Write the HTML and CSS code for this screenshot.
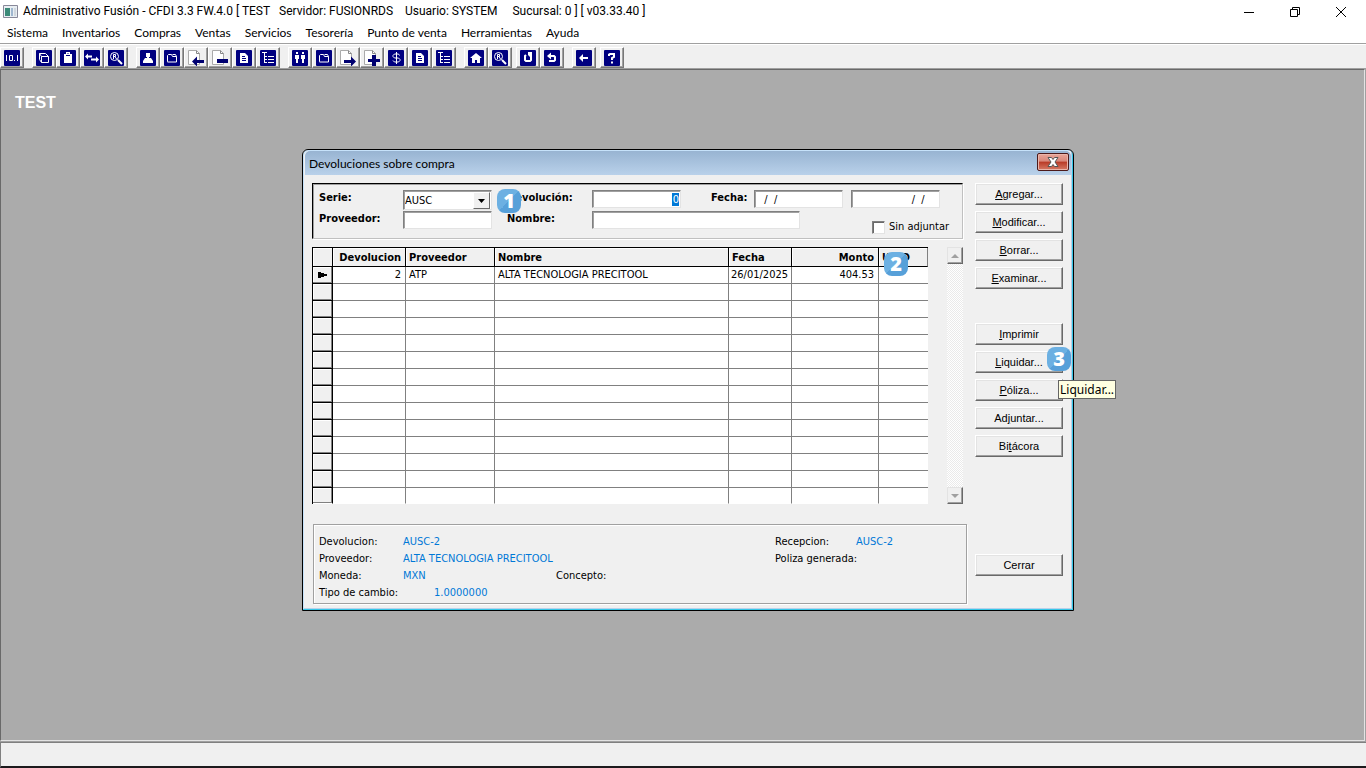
FILE: index.html
```html
<!DOCTYPE html>
<html lang="es">
<head>
<meta charset="utf-8">
<title>Administrativo Fusión</title>
<link rel="stylesheet" href="styles.css">
</head>
<body>
<svg class="defs" aria-hidden="true">
  <symbol id="i-bg" viewBox="0 0 16 16"><rect width="16" height="16" rx="1" fill="#000080"/></symbol>
  <symbol id="i-num" viewBox="0 0 16 16"><use href="#i-bg"/><path d="M2.500 5v6M13.500 5v6M10 10.500h1M5.500 5.500h3v5h-3z" fill="none" stroke="#fff"/></symbol>
  <symbol id="i-cube" viewBox="0 0 16 16"><use href="#i-bg"/><path d="M5.500 6.500h7v6h-7zM5.500 6.500l-2-3h6l3 3M3.500 3.500v6l2 3" fill="none" stroke="#fff"/></symbol>
  <symbol id="i-clip" viewBox="0 0 16 16"><use href="#i-bg"/><path d="M4 4h2V2h4v2h2v9H4z" fill="#fff"/><path d="M6 5.500h4M7.500 3.500h1" stroke="#000080"/></symbol>
  <symbol id="i-swap" viewBox="0 0 16 16"><use href="#i-bg"/><path d="M1 6.500l3-3v2h4v2H4v2zM15 9.500l-3-3v2H7v2h5v2z" fill="#fff"/></symbol>
  <symbol id="i-find" viewBox="0 0 16 16"><use href="#i-bg"/><circle cx="6.500" cy="6.500" r="4" fill="none" stroke="#fff"/><path d="M5.500 9V4.500h2v2h-2M7 6.500L8.500 9" fill="none" stroke="#fff"/><path d="M10 10l4 4" stroke="#fff" stroke-width="2"/></symbol>
  <symbol id="i-user" viewBox="0 0 16 16"><use href="#i-bg"/><path d="M6 3h4v4H9v1h2l2 3v2H3v-2l2-3h2V7H6z" fill="#fff"/></symbol>
  <symbol id="i-folder" viewBox="0 0 16 16"><use href="#i-bg"/><path d="M3.500 11.500v-6l1-1h3l1 2h4v5.500h-9zM8.500 4.500h3l1 2" fill="none" stroke="#fff"/></symbol>
  <symbol id="i-page" viewBox="0 0 16 16"><path d="M.5 .5h8l3 3v11H.5z" fill="#fff" stroke="#aaa"/><path d="M8.500 .5v3h3" fill="none" stroke="#888"/></symbol>
  <symbol id="i-pleft" viewBox="0 0 16 16"><use href="#i-page"/><path d="M4 11.500l5-5V10h7v3H9v3.500z" fill="#000070"/></symbol>
  <symbol id="i-pminus" viewBox="0 0 16 16"><use href="#i-page"/><path d="M5 9h11v4H5z" fill="#000070"/></symbol>
  <symbol id="i-pright" viewBox="0 0 16 16"><use href="#i-page"/><path d="M16 11.500l-5-5V10H4v3h7v3.500z" fill="#000070"/></symbol>
  <symbol id="i-pplus" viewBox="0 0 16 16"><use href="#i-page"/><path d="M8 5h4v4h4v3h-4v4H8v-4H4V9h4z" fill="#000070"/></symbol>
  <symbol id="i-doc" viewBox="0 0 16 16"><use href="#i-bg"/><path d="M4 3h5l3 3v7H4z" fill="#fff"/><path d="M6 6.500h3M6 8.500h4M6 10.500h4" stroke="#000080"/></symbol>
  <symbol id="i-tree" viewBox="0 0 16 16"><use href="#i-bg"/><path d="M2 2.500h5M4.500 3v10M5 6.500h2M5 9.500h2M5 12.500h2M8 6.500h6M8 9.500h6M8 12.500h6" stroke="#fff" fill="none"/></symbol>
  <symbol id="i-people" viewBox="0 0 16 16"><use href="#i-bg"/><path d="M4 2h2v2H4zM10 2h2v2h-2zM3 5h4v4H6v4H4V9H3zM9 5h4v4h-1v4h-2V9H9z" fill="#fff"/></symbol>
  <symbol id="i-money" viewBox="0 0 16 16"><use href="#i-bg"/><path d="M11.500 5.500l-1-1.500h-4L5 5.500v1L6.500 8h4L12 9.500v1L10.500 12h-4L5 10.500M8.500 2v12" fill="none" stroke="#fff"/></symbol>
  <symbol id="i-home" viewBox="0 0 16 16"><use href="#i-bg"/><path d="M8 3l6 5h-2v5H9v-3H7v3H4V8H2z" fill="#fff"/></symbol>
  <symbol id="i-redo" viewBox="0 0 16 16"><use href="#i-bg"/><path d="M6 5L5 6v4l1 1h4l1-1V7" fill="none" stroke="#fff" stroke-width="2"/><path d="M8 2h4v5H10L8 5z" fill="#fff"/></symbol>
  <symbol id="i-undo" viewBox="0 0 16 16"><use href="#i-bg"/><path d="M6 6h4l1 1v3l-1 1H5" fill="none" stroke="#fff" stroke-width="2"/><path d="M3 6l4-3.500v7z" fill="#fff"/></symbol>
  <symbol id="i-back" viewBox="0 0 16 16"><use href="#i-bg"/><path d="M3 8l4-4v3h5v2H7v3z" fill="#fff"/></symbol>
  <symbol id="i-help" viewBox="0 0 16 16"><use href="#i-bg"/><path d="M5 6V4.500L6 4h4v3L8 8v2M8 11.500v2" fill="none" stroke="#fff" stroke-width="2"/></symbol>
</svg>

<header class="titlebar">
  <svg class="app-icon" viewBox="0 0 15 13"><path d="M.5 .5h14v12H.5z" fill="#e8eef2" stroke="#889"/><path d="M2 3h5v8H2z" fill="#3b8a78"/><path d="M8 3h2v8H8z" fill="#9fb7d0"/><path d="M11 3h2v8h-2z" fill="#cfd6dd"/></svg>
  <h1 class="app-title">Administrativo Fusión - CFDI 3.3 FW.4.0 [ TEST&nbsp;&nbsp; Servidor: FUSIONRDS&nbsp;&nbsp;&nbsp; Usuario: SYSTEM&nbsp;&nbsp;&nbsp;&nbsp; Sucursal: 0 ] [ v03.33.40 ]</h1>
  <div class="win-controls">
    <button aria-label="Minimizar"><svg viewBox="0 0 12 12"><path d="M1 6.500h10" stroke="#000"/></svg></button>
    <button aria-label="Restaurar"><svg viewBox="0 0 12 12"><path d="M1.500 3.500h7v7h-7zM3.500 3.500v-2h7v7h-2" fill="none" stroke="#000"/></svg></button>
    <button aria-label="Cerrar aplicación"><svg viewBox="0 0 12 12"><path d="M1 1l10 10M11 1L1 11" stroke="#000"/></svg></button>
  </div>
</header>

<nav class="menu">
  <button>Sistema</button><button>Inventarios</button><button>Compras</button><button>Ventas</button><button>Servicios</button><button>Tesorería</button><button>Punto de venta</button><button>Herramientas</button><button>Ayuda</button>
</nav>

<div class="toolbar" role="toolbar">
  <button aria-label="Numeración"><svg><use href="#i-num"/></svg></button>
  <button class="first" aria-label="Productos"><svg><use href="#i-cube"/></svg></button>
  <button aria-label="Inventario"><svg><use href="#i-clip"/></svg></button>
  <button aria-label="Movimientos"><svg><use href="#i-swap"/></svg></button>
  <button aria-label="Consultar inventario"><svg><use href="#i-find"/></svg></button>
  <button class="first" aria-label="Proveedores"><svg><use href="#i-user"/></svg></button>
  <button aria-label="Carpeta de compras"><svg><use href="#i-folder"/></svg></button>
  <button aria-label="Recepciones"><svg><use href="#i-pleft"/></svg></button>
  <button aria-label="Devoluciones"><svg><use href="#i-pminus"/></svg></button>
  <button aria-label="Documento de compra"><svg><use href="#i-doc"/></svg></button>
  <button aria-label="Árbol de compras"><svg><use href="#i-tree"/></svg></button>
  <button class="first" aria-label="Clientes"><svg><use href="#i-people"/></svg></button>
  <button aria-label="Carpeta de ventas"><svg><use href="#i-folder"/></svg></button>
  <button aria-label="Salidas"><svg><use href="#i-pright"/></svg></button>
  <button aria-label="Nuevo documento"><svg><use href="#i-pplus"/></svg></button>
  <button aria-label="Cobros"><svg><use href="#i-money"/></svg></button>
  <button aria-label="Documento de venta"><svg><use href="#i-doc"/></svg></button>
  <button aria-label="Árbol de ventas"><svg><use href="#i-tree"/></svg></button>
  <button class="first" aria-label="Inicio"><svg><use href="#i-home"/></svg></button>
  <button aria-label="Buscar"><svg><use href="#i-find"/></svg></button>
  <button class="near" aria-label="Actualizar"><svg><use href="#i-redo"/></svg></button>
  <button aria-label="Deshacer"><svg><use href="#i-undo"/></svg></button>
  <button class="first" aria-label="Salir"><svg><use href="#i-back"/></svg></button>
  <button class="near" aria-label="Ayuda"><svg><use href="#i-help"/></svg></button>
</div>

<main class="workspace">
  <p class="company">TEST</p>

  <section class="dialog" role="dialog" aria-labelledby="dlg-title">
    <header class="dialog-head">
      <h2 id="dlg-title">Devoluciones sobre compra</h2>
      <button class="dialog-close" aria-label="Cerrar ventana"><svg viewBox="0 0 12 10"><path d="M1 .5h3.500L6 2.500 7.500 .5H11L8 5l3 4.500H7.500L6 7.500l-1.500 2H1L4 5z" fill="#fff" stroke="#555"/></svg></button>
    </header>
    <div class="dialog-body">
      <div class="dialog-main">
        <form class="filters">
          <label for="serie">Serie:</label>
          <div class="combo">
            <select id="serie"><option>AUSC</option></select>
            <span class="combo-arrow"><svg viewBox="0 0 9 5"><path d="M0 0h9L4.500 5z"/></svg></span>
          </div>
          <label for="devolucion">Devolución:</label>
          <input id="devolucion" class="selected" type="text" value="0">
          <label for="fecha1">Fecha:</label>
          <input id="fecha1" type="text" value="&nbsp; /&nbsp; /">
          <input class="end-date" type="text" value="/&nbsp; /&nbsp;&nbsp;" aria-label="Fecha final">
          <label for="prov">Proveedor:</label>
          <input id="prov" type="text">
          <label for="nombre">Nombre:</label>
          <input id="nombre" class="wide" type="text">
          <label class="check"><input type="checkbox">Sin adjuntar</label>
        </form>

        <div class="grid-area">
          <table class="grid">
            <colgroup><col class="c-mark"><col class="c-dev"><col class="c-prov"><col class="c-name"><col class="c-date"><col class="c-amt"><col class="c-uuid"></colgroup>
            <thead><tr><th></th><th class="num">Devolucion</th><th>Proveedor</th><th>Nombre</th><th>Fecha</th><th class="num">Monto</th><th>UUID</th></tr></thead>
            <tbody>
              <tr><td><svg class="marker" viewBox="0 0 9 6"><path d="M0 0h3v1h3v1h3v2H6v1H3v1H0z"/></svg></td><td class="num">2</td><td>ATP</td><td>ALTA TECNOLOGIA PRECITOOL</td><td class="date">26/01/2025</td><td class="num">404.53</td><td></td></tr>
              <tr><td></td><td></td><td></td><td></td><td></td><td></td><td></td></tr>
              <tr><td></td><td></td><td></td><td></td><td></td><td></td><td></td></tr>
              <tr><td></td><td></td><td></td><td></td><td></td><td></td><td></td></tr>
              <tr><td></td><td></td><td></td><td></td><td></td><td></td><td></td></tr>
              <tr><td></td><td></td><td></td><td></td><td></td><td></td><td></td></tr>
              <tr><td></td><td></td><td></td><td></td><td></td><td></td><td></td></tr>
              <tr><td></td><td></td><td></td><td></td><td></td><td></td><td></td></tr>
              <tr><td></td><td></td><td></td><td></td><td></td><td></td><td></td></tr>
              <tr><td></td><td></td><td></td><td></td><td></td><td></td><td></td></tr>
              <tr><td></td><td></td><td></td><td></td><td></td><td></td><td></td></tr>
              <tr><td></td><td></td><td></td><td></td><td></td><td></td><td></td></tr>
              <tr><td></td><td></td><td></td><td></td><td></td><td></td><td></td></tr>
              <tr><td></td><td></td><td></td><td></td><td></td><td></td><td></td></tr>
            </tbody>
          </table>
          <div class="scrollbar">
            <button aria-label="Subir"><svg viewBox="0 0 8 4"><path d="M0 4h8L4 0z"/></svg></button>
            <button aria-label="Bajar"><svg viewBox="0 0 8 4"><path d="M0 0h8L4 4z"/></svg></button>
          </div>
        </div>

        <div class="details">
          <span>Devolucion:</span><span class="val">AUSC-2</span><span class="col-rec">Recepcion:</span><span class="val">AUSC-2</span>
          <span>Proveedor:</span><span class="val wide-val">ALTA TECNOLOGIA PRECITOOL</span><span class="col-rec">Poliza generada:</span>
          <span class="row-start">Moneda:</span><span class="val">MXN</span><span>Concepto:</span>
          <span class="row-start">Tipo de cambio:</span><span class="val rate">1.0000000</span>
        </div>
      </div>

      <div class="actions">
        <button><u>A</u>gregar...</button>
        <button><u>M</u>odificar...</button>
        <button><u>B</u>orrar...</button>
        <button><u>E</u>xaminar...</button>
        <button class="group"><u>I</u>mprimir</button>
        <button><u>L</u>iquidar...</button>
        <button><u>P</u>óliza...</button>
        <button>Ad<u>j</u>untar...</button>
        <button>Bi<u>t</u>ácora</button>
        <button class="last">Cerrar</button>
      </div>
    </div>
    <span class="step step-1">1</span>
    <span class="step step-2">2</span>
    <span class="step step-3">3</span>
    <span class="tip" role="tooltip">Liquidar...</span>
  </section>
</main>

<footer class="status"></footer>
</body>
</html>
```
FILE: styles.css
```css
* { box-sizing: border-box; }
body {
  margin: 0;
  min-height: 100vh;
  display: flex;
  flex-direction: column;
  background: #f0f0f0;
  color: #000;
  font-family: "DejaVu Sans Condensed", "Noto Sans", sans-serif;
  font-size: 11px;
}
button, input, select { font: inherit; color: inherit; margin: 0; padding: 0; }
.defs { position: absolute; width: 0; height: 0; }

.titlebar { display: flex; align-items: center; height: 23px; padding: 0 2px 0 3px; background: #fff; }
.app-icon { width: 15px; height: 13px; margin-right: 5px; }
.app-title { flex: 1; margin: 0; font: 12px/23px Roboto, sans-serif; }
.win-controls { display: flex; }
.win-controls button { display: flex; align-items: center; justify-content: center; width: 46px; height: 21px; border: 0; background: none; }
.win-controls svg { width: 12px; height: 12px; }

.menu { display: flex; background: #fff; height: 20px; }
.menu button { padding: 0 7px; border: 0; background: none; font: 12px/20px Lato, sans-serif; }

.toolbar { display: flex; height: 26px; padding-top: 4px; background: linear-gradient(#a0a0a0 1px, #fff 1px, #fff 2px, #f0f0f0 2px); }
.toolbar button { display: flex; align-items: center; justify-content: center; width: 24px; height: 21px; border: 1px solid; border-color: #fff #777 #777 #fff; box-shadow: inset -1px -1px #a0a0a0; background: #f0f0f0; }
.toolbar .first { margin-left: 8px; }
.toolbar .near { margin-left: 4px; }
.toolbar svg { width: 16px; height: 16px; }

.workspace { position: relative; flex: 1; margin-right: 1px; background: #ababab; border: 1px solid; border-color: #696969 #e3e3e3 #e3e3e3 #696969; outline: 1px solid #a0a0a0; }
.company { margin: 24px 14px; font: bold 16px/18px "Liberation Sans", sans-serif; color: #fff; }

.dialog { position: absolute; left: 301px; top: 79px; width: 772px; background: #f0f0f0; border: 1px solid #000; border-radius: 6px 6px 0 0; box-shadow: inset -1px -1px #35c7e8, inset 1px 1px #c6e2fa, inset -2px -2px #b9d1ea; }
.dialog-head { display: flex; justify-content: space-between; align-items: flex-start; height: 24px; margin: 1px 2px 0; padding: 2px 2px 0 4px; border-radius: 5px 5px 0 0; background: linear-gradient(#98b4d2, #b9d1ea); }
.dialog-head h2 { margin: 0; font: 12px/22px Lato, sans-serif; }
.dialog-close { display: flex; align-items: center; justify-content: center; width: 32px; height: 18px; border: 1px solid #4d1a1a; border-radius: 2px; background: linear-gradient(#e9a598, #d8877a 45%, #b93a26 50%, #d67b66); box-shadow: inset 0 0 0 1px #eab5aa; }
.dialog-close svg { width: 12px; height: 10px; }
.dialog-body { display: flex; justify-content: space-between; gap: 8px; padding: 8px 10px 6px 9px; }
.dialog-main { flex: 1; }

.filters {
  display: grid;
  grid-template-columns: 84px 104px 85px 119px 43px 97px 1fr;
  grid-template-rows: 21px 24px;
  width: 651px;
  padding: 6px 0 3px 6px;
  border: 1px solid;
  border-color: #000 #c0c0c0 #c0c0c0 #000;
  box-shadow: inset 1px 1px #a0a0a0, 1px 1px #fff;
}
.filters label { font-weight: bold; line-height: 16px; }
.filters input[type="text"], .combo { width: 89px; height: 18px; background: #fff; border: 1px solid; border-color: #808080 #e3e3e3 #e3e3e3 #808080; box-shadow: inset 1px 1px #a0a0a0; padding: 0 3px; }
.filters input.wide { width: 208px; grid-column: span 2; }
.filters input.end-date { text-align: right; padding-right: 8px; }
.filters input.selected { text-align: right; color: #fff; background: linear-gradient(#0078d7, #0078d7) no-repeat right 1px top 2px / 7px 13px #fff; padding-right: 1px; }
.combo { display: flex; }
.filters .combo { height: 20px; padding: 0 1px 0 0; }
.combo select { flex: 1; min-width: 0; padding: 2px 1px; border: 0; background: none; appearance: none; }
.combo-arrow { display: flex; align-items: center; justify-content: center; width: 17px; height: 17px; margin-top: 1px; border: 1px solid; border-color: #fff #696969 #696969 #fff; background: #f0f0f0; pointer-events: none; }
.combo-arrow svg { width: 7px; height: 4px; }
.filters .check { grid-column: 7; display: flex; align-items: center; align-self: end; gap: 4px; margin-left: 21px; font-weight: normal; }
.check input { appearance: none; width: 13px; height: 13px; background: #fff; border: 1px solid; border-color: #808080 #e3e3e3 #e3e3e3 #808080; box-shadow: inset 1px 1px #696969; }

.grid-area { display: flex; justify-content: space-between; width: 651px; margin-top: 8px; }
.grid { width: 616px; table-layout: fixed; border-spacing: 0; border-left: 1px solid #000; border-top: 1px solid #000; }
.c-mark { width: 20px; }
.c-dev { width: 73px; }
.c-prov { width: 89px; }
.c-name { width: 234px; }
.c-date { width: 63px; }
.c-amt { width: 87px; }
.grid th, .grid td { padding: 0 3px; text-align: left; white-space: nowrap; }
.grid th { height: 19px; line-height: 17px; background: #f0f0f0; border-right: 1px solid #000; border-bottom: 1px solid #000; box-shadow: inset 1px 1px #fff; }
.grid th:last-child { border-right-color: #808080; }
.grid td { height: 17px; line-height: 14px; background: #fff; border-right: 1px solid #808080; border-bottom: 1px solid #808080; }
.grid td:last-child { border-right: 0; }
.grid tbody tr:last-child td { height: 16px; border-bottom-color: #fff; }
.grid td:first-child { padding: 0 5px; background: #f0f0f0; border-right-color: #000; border-bottom-color: #000; box-shadow: inset -1px -1px #808080, inset 1px 1px #fff; }
.grid .num { text-align: right; padding-right: 4px; }
.grid .date { padding-left: 2px; }
.marker { display: block; width: 9px; height: 6px; }
.scrollbar { display: flex; flex-direction: column; justify-content: space-between; width: 16px; background: repeating-conic-gradient(#fff 0 25%, #eaeaea 0 50%) 0 0 / 2px 2px; }
.scrollbar button { display: flex; align-items: center; justify-content: center; height: 17px; background: #f0f0f0; border: 1px solid; border-color: #e3e3e3 #696969 #696969 #e3e3e3; box-shadow: inset -1px -1px #a0a0a0; }
.scrollbar svg { width: 8px; height: 4px; fill: #a0a0a0; }

.details {
  display: grid;
  grid-template-columns: 84px 153px 219px 81px 1fr;
  grid-auto-rows: 17px;
  margin: 20px 0 0 1px;
  padding: 8px 0 2px 5px;
  line-height: 17px;
  border: 1px solid #a0a0a0;
  box-shadow: inset 1px 1px #fff, 1px 1px #fff;
}
.details .val { color: #0078d7; }
.details .col-rec { grid-column: 4; white-space: nowrap; }
.details .wide-val { grid-column: 2 / 4; }
.details .row-start { grid-column: 1; white-space: nowrap; }
.details .rate { padding-left: 31px; }

.actions { display: flex; flex-direction: column; gap: 6px; width: 88px; font-family: "Liberation Sans", sans-serif; }
.actions button { height: 22px; background: #f0f0f0; border: 1px solid; border-color: #fff #696969 #696969 #fff; box-shadow: inset -1px -1px #a0a0a0, inset 1px 1px #e3e3e3; }
.actions .group { margin-top: 28px; }
.actions .last { margin: auto 0 28px; }

.step { position: absolute; width: 24px; height: 24px; border-radius: 8px; background: linear-gradient(135deg, #6cb0e2 50%, #57a0d9 50%); color: #fff; font: 800 20px/24px "Open Sans", sans-serif; text-align: center; }
.step-1 { left: 194px; top: 39px; }
.step-2 { left: 581px; top: 102px; }
.step-3 { left: 744px; top: 197px; }
.tip { position: absolute; left: 755px; top: 230px; padding: 0 1px; border: 1px solid #646464; background: #ffffe1; font: 12px/17px "Noto Sans", sans-serif; }

.status { height: 26px; margin-top: 1px; border: solid #808080; border-width: 1px 0 0 1px; border-bottom: 2px solid #1c1a1c; background: #f0f0f0; }
```
